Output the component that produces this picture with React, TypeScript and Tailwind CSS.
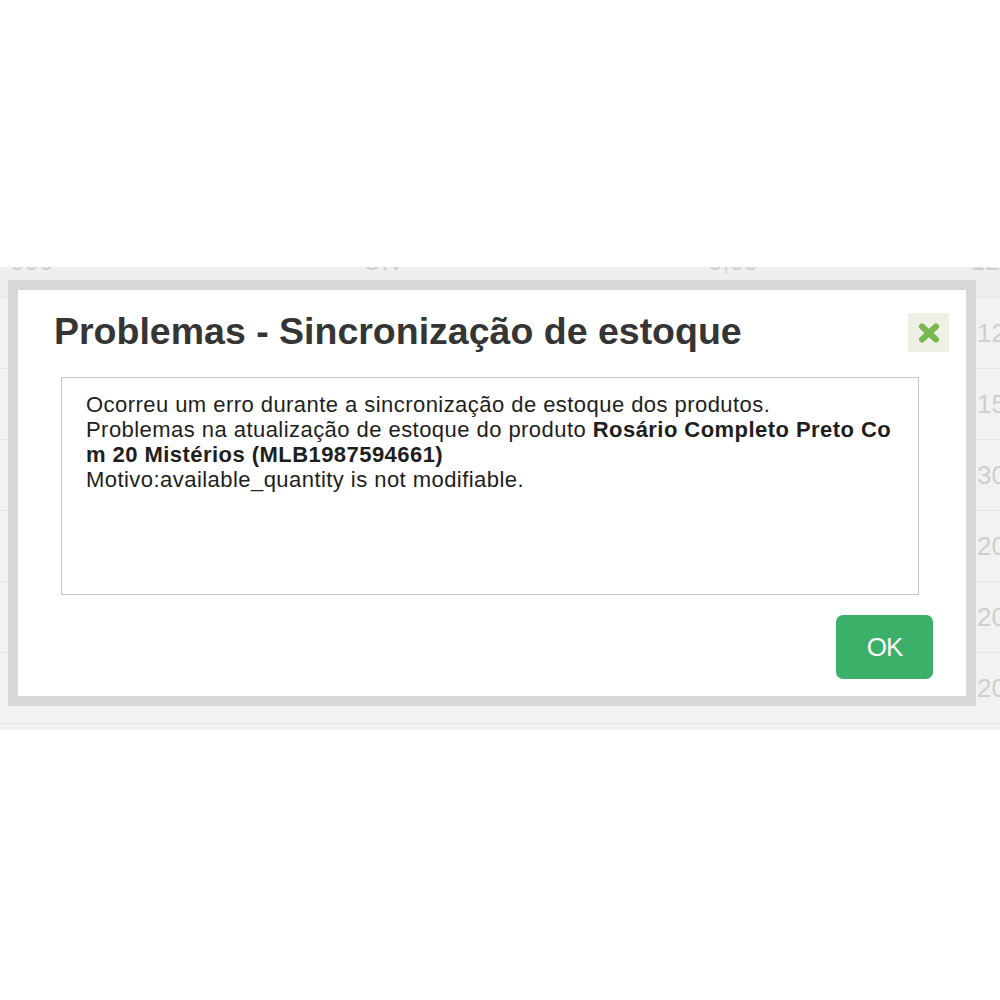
import React from 'react';

const rows = ['12', '15', '30', '20', '20', '20', '20'];

const CloseIcon: React.FC = () => (
  <svg width="22" height="20" viewBox="0 0 22 20">
    <g stroke="#76b84f" strokeWidth="6" strokeLinecap="round">
      <line x1="4" y1="3.5" x2="18" y2="16.5" />
      <line x1="18" y1="3.5" x2="4" y2="16.5" />
    </g>
  </svg>
);

const App: React.FC = () => {
  return (
    <div className="min-h-[1000px] bg-white pt-[267px] font-['Liberation_Sans',Arial,sans-serif]">
      <div className="relative h-[463px] overflow-hidden bg-[#efefef]">
        {/* table behind the dialog */}
        <div className="-mt-[41px] flex flex-col">
          <div className="flex h-[71px] items-center text-[26px] text-[#cfcfcf]">
            <span className="w-[365px] pl-[10px]">000</span>
            <span className="w-[347px]">UN</span>
            <span className="w-[265px]">0,00</span>
            <span>12</span>
          </div>
          {rows.map((n, i) => (
            <div
              key={i}
              className="flex h-[71px] items-center border-t border-[#e6e6e6] bg-[#f2f2f2] pl-[977px] text-[26px] text-[#cfcfcf]"
            >
              {n}
            </div>
          ))}
        </div>

        {/* dialog */}
        <div className="absolute left-[8px] top-[13px] h-[426px] w-[968px] border-[10px] border-[#d7d7d7] bg-white">
          <div className="flex items-start justify-between pl-[36px] pr-[17px] pt-[19px]">
            <h2 className="text-[37.5px] font-bold leading-[44px] text-[#353535]">
              Problemas - Sincronização de estoque
            </h2>
            <button className="mt-[4px] flex h-[39px] w-[41px] items-center justify-center bg-[#efefe5]">
              <CloseIcon />
            </button>
          </div>

          <div className="ml-[43px] mr-[47px] mt-[24px] h-[218px] border border-[#c6c6c6] px-[24px] pt-[14px] text-[22px] leading-[25px] tracking-[0.45px] text-[#1e1e1e]">
            Ocorreu um erro durante a sincronização de estoque dos produtos.
            <br />
            Problemas na atualização de estoque do produto <b>Rosário Completo Preto Co</b>
            <br />
            <b>m 20 Mistérios (MLB1987594661)</b>
            <br />
            Motivo:available_quantity is not modifiable.
          </div>

          <div className="flex justify-end pr-[33px] pt-[20px]">
            <button className="flex h-[64px] w-[97px] items-center justify-center rounded-[7px] bg-[#3caf68] text-[26px] tracking-[-1px] text-white">
              OK
            </button>
          </div>
        </div>
      </div>
    </div>
  );
};

export default App;
